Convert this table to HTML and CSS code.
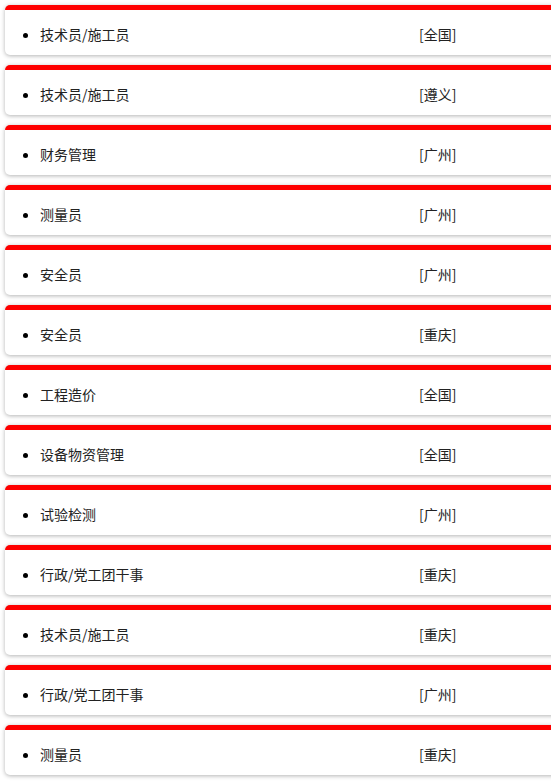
FILE: index.html
```html
<!DOCTYPE html>
<html lang="zh">
<head>
<meta charset="utf-8">
<link rel="stylesheet" href="styles.css">
</head>
<body>
<div class="list">
  <div class="card"><ul><li><span class="name">技术员/施工员</span><span class="loc">[全国]</span></li></ul></div>
  <div class="card"><ul><li><span class="name">技术员/施工员</span><span class="loc">[遵义]</span></li></ul></div>
  <div class="card"><ul><li><span class="name">财务管理</span><span class="loc">[广州]</span></li></ul></div>
  <div class="card"><ul><li><span class="name">测量员</span><span class="loc">[广州]</span></li></ul></div>
  <div class="card"><ul><li><span class="name">安全员</span><span class="loc">[广州]</span></li></ul></div>
  <div class="card"><ul><li><span class="name">安全员</span><span class="loc">[重庆]</span></li></ul></div>
  <div class="card"><ul><li><span class="name">工程造价</span><span class="loc">[全国]</span></li></ul></div>
  <div class="card"><ul><li><span class="name">设备物资管理</span><span class="loc">[全国]</span></li></ul></div>
  <div class="card"><ul><li><span class="name">试验检测</span><span class="loc">[广州]</span></li></ul></div>
  <div class="card"><ul><li><span class="name">行政/党工团干事</span><span class="loc">[重庆]</span></li></ul></div>
  <div class="card"><ul><li><span class="name">技术员/施工员</span><span class="loc">[重庆]</span></li></ul></div>
  <div class="card"><ul><li><span class="name">行政/党工团干事</span><span class="loc">[广州]</span></li></ul></div>
  <div class="card"><ul><li><span class="name">测量员</span><span class="loc">[重庆]</span></li></ul></div>
</div>
</body>
</html>
```
FILE: styles.css
```css
html, body {
  margin: 0;
  padding: 0;
  overflow: hidden;
  background: #fff;
}
body {
  font-family: "Microsoft YaHei", "Noto Sans CJK SC", "Noto Sans", sans-serif;
  font-size: 14px;
  color: #000;
}
.list {
  padding: 5px 0 0 5px;
  width: 600px;
}
.card {
  border-top: 5px solid #f00;
  border-radius: 5px;
  box-shadow: 0 1px 4px rgba(0, 0, 0, 0.3);
  background: #fff;
  margin-bottom: 10px;
  height: 45px;
  box-sizing: content-box;
}
.card ul {
  margin: 0;
  padding: 14px 0 0 35px;
  list-style: disc;
}
.card li {
  line-height: 20px;
}
.name {
  display: inline-block;
  width: 379px;
  color: #222;
}
.loc {
  display: inline-block;
  color: #222;
}
```
